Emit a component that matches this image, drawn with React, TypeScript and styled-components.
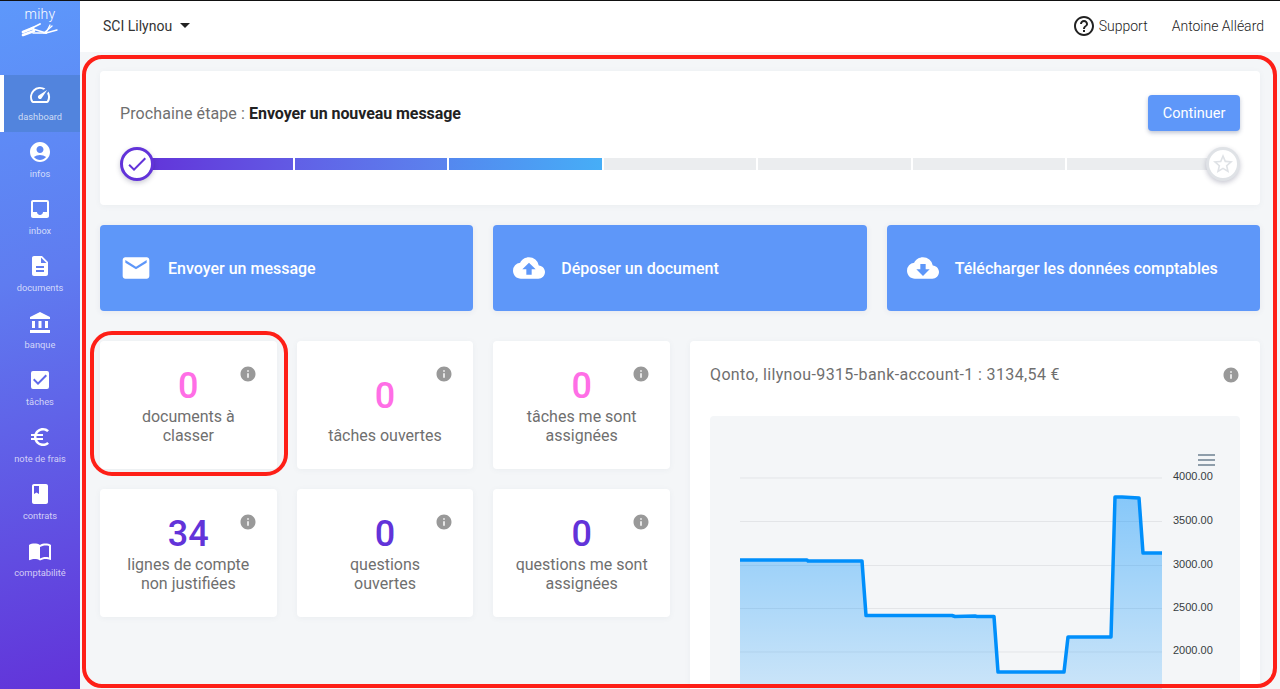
import React, { FunctionComponent, ReactNode } from "react";
import styled, { createGlobalStyle } from "styled-components";
import {
  MdAccountBalance,
  MdAccountCircle,
  MdBook,
  MdCheck,
  MdCheckBox,
  MdCloudDownload,
  MdCloudUpload,
  MdDescription,
  MdEmail,
  MdEuroSymbol,
  MdHelpOutline,
  MdImportContacts,
  MdInbox,
  MdInfo,
  MdSpeed,
  MdStarBorder,
} from "react-icons/md";

const GlobalStyle = createGlobalStyle`
  html, body {
    margin: 0;
    height: 100%;
    overflow: hidden;
    background: #f4f6f8;
    font-family: Roboto, "Liberation Sans", sans-serif;
  }
  * { box-sizing: border-box; }
`;

const navItems = [
  { label: "dashboard", icon: <MdSpeed />, active: true },
  { label: "infos", icon: <MdAccountCircle /> },
  { label: "inbox", icon: <MdInbox /> },
  { label: "documents", icon: <MdDescription /> },
  { label: "banque", icon: <MdAccountBalance /> },
  { label: "tâches", icon: <MdCheckBox /> },
  { label: "note de frais", icon: <MdEuroSymbol /> },
  { label: "contrats", icon: <MdBook /> },
  { label: "comptabilité", icon: <MdImportContacts /> },
];

const segments = [
  { from: "#6233d9", to: "#625ae4", done: true },
  { from: "#6160e6", to: "#5b84ee", done: true },
  { from: "#5488ef", to: "#46aef7", done: true },
  { done: false },
  { done: false },
  { done: false },
  { done: false },
];

const stats = [
  { value: "0", label: "documents à classer", pink: true, marked: true },
  { value: "0", label: "tâches ouvertes", pink: true },
  { value: "0", label: "tâches me sont assignées", pink: true },
  { value: "34", label: "lignes de compte non justifiées" },
  { value: "0", label: "questions ouvertes" },
  { value: "0", label: "questions me sont assignées" },
];

const gridLines = [62, 105.5, 149.5, 192.5, 236];
const axisLabels = ["4000.00", "3500.00", "3000.00", "2500.00", "2000.00"];
const linePoints =
  "30,144 97,144 98,145 152,145 156,199.5 242,199.5 245,200.5 265,200 267,200.5 284,200.5 288,256 354,256 358,221 401,221 405,81 412,81 429,82 433,137 452,137";

const App: FunctionComponent = () => {
  return (
    <Page>
      <GlobalStyle />
      <Sidebar>
        <Logo>
          <LogoName>mihy</LogoName>
          <svg width="38" height="16" viewBox="0 0 38 16">
            <g stroke="#fff" strokeLinecap="round" fill="none">
              <path d="M2 9 L12 5" strokeWidth="2.8" />
              <path d="M2 12 L13 8" strokeWidth="2.6" />
              <path d="M7 7 L19 1" strokeWidth="1.8" />
              <path d="M12 6 L25 10" strokeWidth="1.8" />
              <path d="M12 10 L25 10" strokeWidth="1.6" />
              <path d="M23 10 L31 3" strokeWidth="1.4" />
              <path d="M25 10 L36 7" strokeWidth="1.4" />
              <path d="M25 10 L29 2" strokeWidth="1.3" />
            </g>
          </svg>
        </Logo>
        {navItems.map((item) => (
          <NavItem key={item.label} $active={item.active}>
            {item.icon}
            <NavLabel>{item.label}</NavLabel>
          </NavItem>
        ))}
      </Sidebar>
      <Column>
        <Topbar>
          <CompanyName>
            SCI Lilynou
            <Caret />
          </CompanyName>
          <TopRight>
            <SupportLink>
              <MdHelpOutline />
              Support
            </SupportLink>
            <span>Antoine Alléard</span>
          </TopRight>
        </Topbar>
        <Main>
          <StepCard>
            <StepHeader>
              <StepTitle>
                Prochaine étape : <strong>Envoyer un nouveau message</strong>
              </StepTitle>
              <ContinueButton>Continuer</ContinueButton>
            </StepHeader>
            <Track>
              {segments.map((s, i) => (
                <Segment key={i} $from={s.from} $to={s.to} />
              ))}
              <StartBullet>
                <MdCheck />
              </StartBullet>
              <EndBullet>
                <MdStarBorder />
              </EndBullet>
            </Track>
          </StepCard>
          <Actions>
            <ActionButton icon={<MdEmail />}>Envoyer un message</ActionButton>
            <ActionButton icon={<MdCloudUpload />}>Déposer un document</ActionButton>
            <ActionButton icon={<MdCloudDownload />}>
              Télécharger les données comptables
            </ActionButton>
          </Actions>
          <Lower>
            <StatsGrid>
              {stats.map((s) => (
                <StatCard key={s.label}>
                  <StatValue $pink={s.pink}>{s.value}</StatValue>
                  <StatLabel>{s.label}</StatLabel>
                  <InfoBadge>
                    <MdInfo />
                  </InfoBadge>
                  {s.marked && <CardMark />}
                </StatCard>
              ))}
            </StatsGrid>
            <ChartCard>
              <ChartHeader>
                <span>Qonto, lilynou-9315-bank-account-1 : 3134,54 €</span>
                <MdInfo />
              </ChartHeader>
              <ChartPanel>
                <svg width="530" height="320" viewBox="0 0 530 320">
                  <defs>
                    <linearGradient id="area" x1="0" y1="0" x2="0" y2="1">
                      <stop offset="0" stopColor="#008ffb" stopOpacity="0.45" />
                      <stop offset="1" stopColor="#008ffb" stopOpacity="0.1" />
                    </linearGradient>
                  </defs>
                  {gridLines.map((y) => (
                    <line key={y} x1="30" x2="452" y1={y} y2={y} stroke="#e3e5e8" />
                  ))}
                  <polygon points={`${linePoints} 452,320 30,320`} fill="url(#area)" />
                  <polyline
                    points={linePoints}
                    fill="none"
                    stroke="#008ffb"
                    strokeWidth="3.5"
                    strokeLinejoin="round"
                  />
                  {axisLabels.map((label, i) => (
                    <AxisText key={label} x="463" y={gridLines[i] + 2}>
                      {label}
                    </AxisText>
                  ))}
                  <g stroke="#6e8192" strokeWidth="1.6">
                    <line x1="488" x2="505" y1="39" y2="39" />
                    <line x1="488" x2="505" y1="44" y2="44" />
                    <line x1="488" x2="505" y1="49" y2="49" />
                  </g>
                </svg>
              </ChartPanel>
            </ChartCard>
          </Lower>
          <MainMark />
        </Main>
      </Column>
    </Page>
  );
};

const ActionButton: FunctionComponent<{ icon: ReactNode; children: ReactNode }> = ({
  icon,
  children,
}) => (
  <Action>
    {icon}
    {children}
  </Action>
);

const Page = styled.div`
  display: flex;
  height: 100vh;
  border-top: 1px solid #111;
  overflow: hidden;
`;
const Sidebar = styled.nav`
  width: 80px;
  flex: none;
  background: linear-gradient(165deg, #5d98fb 0%, #5f7cf0 40%, #6233d9 100%);
`;
const Logo = styled.div`
  height: 74px;
  display: flex;
  flex-direction: column;
  align-items: center;
  padding-top: 6px;
  svg {
    margin-top: 1px;
  }
`;
const LogoName = styled.div`
  color: #fff;
  font-size: 14px;
  font-weight: 300;
  line-height: 15px;
  letter-spacing: 0.3px;
`;
const NavItem = styled.div<{ $active?: boolean }>`
  height: 57px;
  display: flex;
  flex-direction: column;
  align-items: center;
  padding-top: 8px;
  color: #fff;
  background: ${(p) => (p.$active ? "#5284dd" : "transparent")};
  border-left: 4px solid ${(p) => (p.$active ? "#fff" : "transparent")};
  padding-right: 4px;
  svg {
    font-size: 24px;
  }
`;
const NavLabel = styled.span`
  margin-top: 4px;
  font-size: 9.3px;
  line-height: 12px;
  color: rgba(255, 255, 255, 0.72);
  white-space: nowrap;
`;
const Column = styled.div`
  flex: 1;
  min-width: 0;
  display: flex;
  flex-direction: column;
`;
const Topbar = styled.header`
  height: 51px;
  flex: none;
  display: flex;
  align-items: center;
  justify-content: space-between;
  padding: 0 16px 2px 23px;
  background: #fff;
  font-size: 14px;
  font-weight: 300;
  color: #222;
`;
const CompanyName = styled.div`
  display: flex;
  align-items: center;
  gap: 8px;
  font-weight: 400;
  color: #333;
`;
const Caret = styled.span`
  width: 0;
  height: 0;
  border-left: 5px solid transparent;
  border-right: 5px solid transparent;
  border-top: 5px solid #222;
`;
const TopRight = styled.div`
  display: flex;
  align-items: center;
  gap: 24px;
`;
const SupportLink = styled.div`
  display: flex;
  align-items: center;
  gap: 3px;
  svg {
    font-size: 24px;
  }
`;
const Main = styled.main`
  position: relative;
  flex: 1;
  min-height: 0;
  padding: 19px 20px 0;
  display: flex;
  flex-direction: column;
  gap: 20px;
  overflow: hidden;
`;
const MainMark = styled.div`
  position: absolute;
  inset: 3px 3px 1px 2px;
  border: 4px solid #fe1f17;
  border-radius: 20px;
  pointer-events: none;
`;
const StepCard = styled.section`
  background: #fff;
  border-radius: 4px;
  height: 134px;
  flex: none;
  padding: 24px 20px 0;
  box-shadow: 0 1px 6px rgba(60, 70, 90, 0.05);
`;
const StepHeader = styled.div`
  display: flex;
  align-items: center;
  justify-content: space-between;
`;
const StepTitle = styled.div`
  font-size: 16px;
  color: #6f6f6f;
  letter-spacing: 0.1px;
  strong {
    color: #222;
    font-weight: 700;
    letter-spacing: -0.07px;
  }
`;
const ContinueButton = styled.button`
  width: 92px;
  height: 36px;
  border: 0;
  border-radius: 4px;
  background: #5e97f9;
  color: #fff;
  font: 400 14.5px Roboto, sans-serif;
  box-shadow: 0 2px 4px rgba(40, 60, 110, 0.3);
`;
const Track = styled.div`
  position: relative;
  margin-top: 27px;
  display: flex;
  gap: 2px;
  height: 12px;
  padding: 0 20px;
`;
const Segment = styled.div<{ $from?: string; $to?: string }>`
  flex: 1;
  background: ${(p) =>
    p.$from ? `linear-gradient(90deg, ${p.$from}, ${p.$to})` : "#ebedef"};
`;
const Bullet = styled.div`
  position: absolute;
  top: -11px;
  width: 34px;
  height: 34px;
  border-radius: 50%;
  background: #fff;
  display: flex;
  align-items: center;
  justify-content: center;
  box-shadow: 0 2px 5px rgba(40, 40, 80, 0.25);
`;
const StartBullet = styled(Bullet)`
  left: 0;
  border: 3.5px solid #6233d9;
  color: #6233d9;
  svg {
    font-size: 24px;
  }
`;
const EndBullet = styled(Bullet)`
  right: 0;
  border: 3.5px solid #dfe2e6;
  color: #dfe2e6;
  svg {
    font-size: 24px;
  }
`;
const Actions = styled.div`
  display: grid;
  grid-template-columns: repeat(3, 1fr);
  gap: 20px;
  flex: none;
`;
const Action = styled.div`
  height: 86px;
  display: flex;
  align-items: center;
  gap: 16px;
  padding-left: 20px;
  background: #5e97f9;
  border-radius: 4px;
  color: #fff;
  font-size: 16px;
  font-weight: 500;
  box-shadow: 0 1px 6px rgba(60, 70, 120, 0.08);
  svg {
    font-size: 32px;
  }
`;
const Lower = styled.div`
  display: grid;
  grid-template-columns: 1fr 1fr;
  gap: 20px;
  margin-top: 10px;
  flex: none;
`;
const StatsGrid = styled.div`
  display: grid;
  grid-template-columns: repeat(3, 1fr);
  grid-auto-rows: 128px;
  gap: 20px;
  align-content: start;
`;
const StatCard = styled.div`
  position: relative;
  background: #fff;
  border-radius: 4px;
  display: flex;
  flex-direction: column;
  align-items: center;
  padding: 24px 21px 24px;
  text-align: center;
  box-shadow: 0 1px 6px rgba(60, 70, 90, 0.05);
`;
const StatValue = styled.div<{ $pink?: boolean }>`
  flex: 1;
  display: flex;
  align-items: center;
  font-size: 36px;
  font-weight: 500;
  color: ${(p) => (p.$pink ? "#ff6ee6" : "#6233d9")};
`;
const StatLabel = styled.div`
  font-size: 16px;
  line-height: 19px;
  color: #6f6f6f;
`;
const InfoBadge = styled.span`
  position: absolute;
  top: 24px;
  right: 20px;
  color: #999;
  font-size: 18px;
  line-height: 0;
`;
const CardMark = styled.div`
  position: absolute;
  inset: -10px -11px -7px -10px;
  border: 4px solid #fe1f17;
  border-radius: 22px;
  pointer-events: none;
`;
const ChartCard = styled.section`
  background: #fff;
  border-radius: 4px;
  padding: 0 20px;
  height: 395px;
  box-shadow: 0 1px 6px rgba(60, 70, 90, 0.05);
`;
const ChartHeader = styled.div`
  height: 75px;
  padding-top: 24px;
  display: flex;
  justify-content: space-between;
  font-size: 16px;
  line-height: 19px;
  letter-spacing: 0.37px;
  color: #6f6f6f;
  svg {
    font-size: 18px;
    color: #999;
    margin-top: 1px;
  }
`;
const ChartPanel = styled.div`
  height: 320px;
  background: #f4f6f8;
  border-radius: 4px;
  overflow: hidden;
  svg {
    display: block;
  }
`;
const AxisText = styled.text`
  font-family: "Liberation Sans", Arial, sans-serif;
  font-size: 11px;
  fill: #373d3f;
`;

export default App;
